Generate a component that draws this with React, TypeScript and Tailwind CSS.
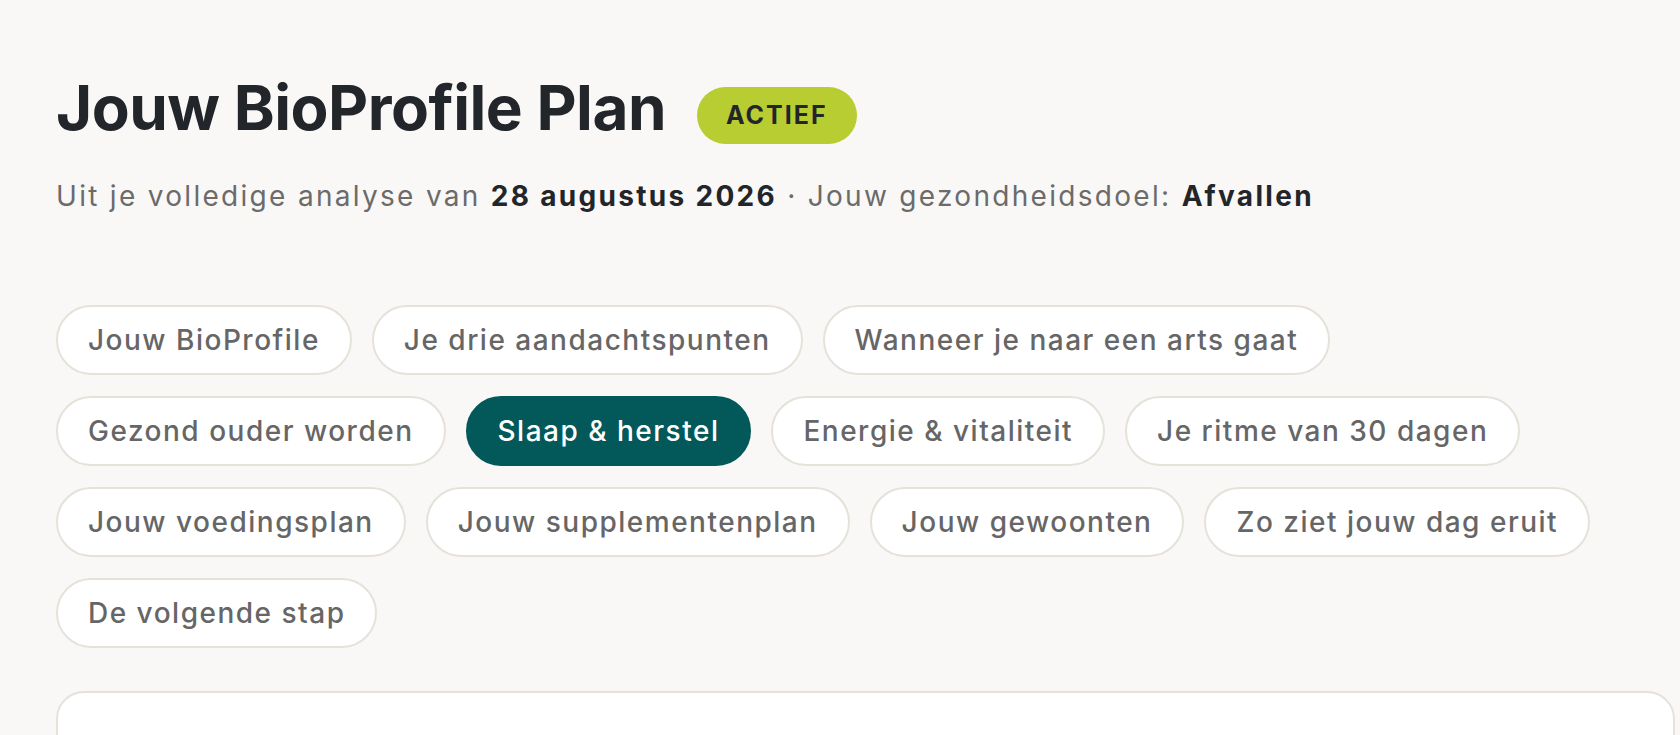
import { useState } from 'react'

const SECTIONS = [
  'Jouw BioProfile',
  'Je drie aandachtspunten',
  'Wanneer je naar een arts gaat',
  'Gezond ouder worden',
  'Slaap & herstel',
  'Energie & vitaliteit',
  'Je ritme van 30 dagen',
  'Jouw voedingsplan',
  'Jouw supplementenplan',
  'Jouw gewoonten',
  'Zo ziet jouw dag eruit',
  'De volgende stap',
]

export default function App() {
  const [active, setActive] = useState('Slaap & herstel')

  return (
    <div className="min-h-screen overflow-hidden bg-[#f9f8f6] pl-[56px] pr-[5px] pt-[70px] font-['Inter',sans-serif]">

      {/* Header */}
      <div className="flex items-start gap-[31px]">
        <h1 className="text-[62px] font-bold leading-[75px] tracking-[-0.5px] text-[#22262a]">
          Jouw BioProfile Plan
        </h1>
        <span className="mt-[17px] flex h-[57px] items-center rounded-full bg-[#b8cd32] px-[29px] text-[25px] font-bold tracking-[2px] text-[#22262a]">
          ACTIEF
        </span>
      </div>

      <p className="mt-[31px] text-[28px] leading-[40px] tracking-[2.3px] text-[#6b6b6b]">
        Uit je volledige analyse van <span className="font-bold text-[#22262a]">28 augustus 2026</span> · Jouw gezondheidsdoel:{' '}
        <span className="font-bold text-[#22262a]">Afvallen</span>
      </p>

      {/* Sectie-navigatie */}
      <div className="mt-[89px] flex flex-wrap gap-x-[20px] gap-y-[21px]">
        {SECTIONS.map((s) => (
          <button
            key={s}
            onClick={() => setActive(s)}
            className={
              s === active
                ? 'flex h-[70px] items-center rounded-full border-2 border-[#03595a] bg-[#03595a] px-[30px] text-[28px] font-medium tracking-[1.5px] text-white'
                : 'flex h-[70px] items-center rounded-full border-2 border-[#e5e2da] bg-white px-[30px] text-[28px] font-medium tracking-[1.5px] text-[#666666]'
            }
          >
            {s}
          </button>
        ))}
      </div>

      {/* Inhoud */}
      <div className="mt-[43px] h-[200px] rounded-[28px] border-2 border-[#e5e2da] bg-white" />
    </div>
  )
}
